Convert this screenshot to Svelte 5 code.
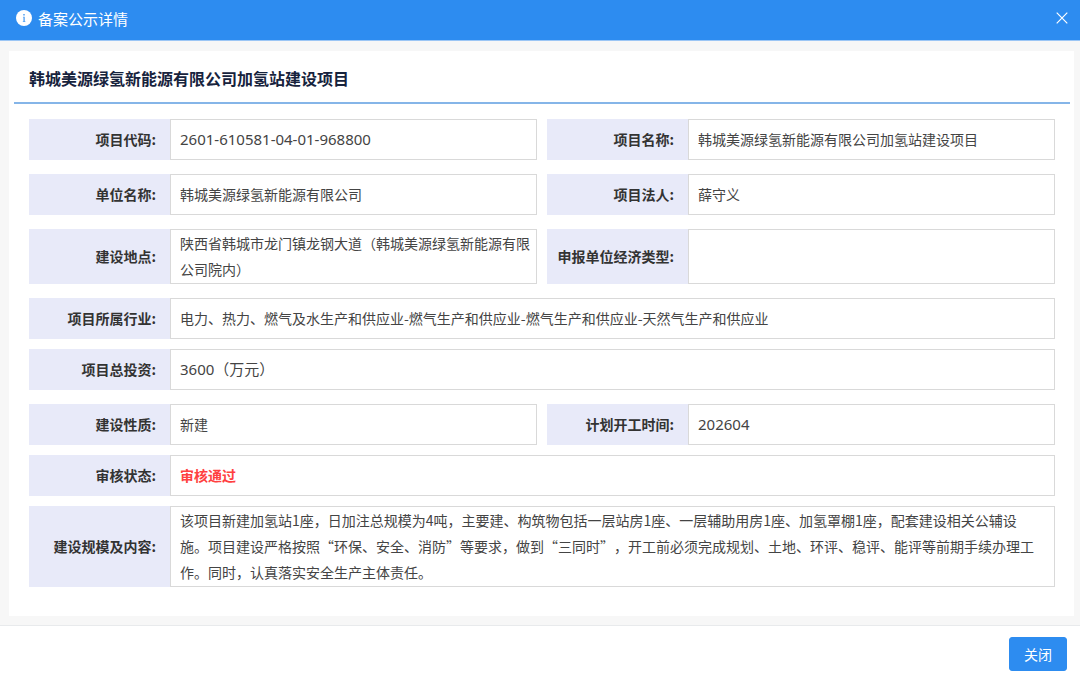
<script lang="ts">
type Field = {
  label: string
  value: string
  numeric?: boolean
  passed?: boolean
}

let open = true

const title = "韩城美源绿氢新能源有限公司加氢站建设项目"

// every group holds rows, every row holds one wide field or a pair
const groups: Field[][][] = [
  [
    [
      { label: "项目代码", value: "2601-610581-04-01-968800", numeric: true },
      { label: "项目名称", value: title }
    ]
  ],
  [
    [
      { label: "单位名称", value: "韩城美源绿氢新能源有限公司" },
      { label: "项目法人", value: "薛守义" }
    ]
  ],
  [
    [
      { label: "建设地点", value: "陕西省韩城市龙门镇龙钢大道（韩城美源绿氢新能源有限公司院内）" },
      { label: "申报单位经济类型", value: "" }
    ]
  ],
  [
    [{ label: "项目所属行业", value: "电力、热力、燃气及水生产和供应业-燃气生产和供应业-燃气生产和供应业-天然气生产和供应业" }],
    [{ label: "项目总投资", value: "3600（万元）", numeric: true }]
  ],
  [
    [
      { label: "建设性质", value: "新建" },
      { label: "计划开工时间", value: "202604", numeric: true }
    ],
    [{ label: "审核状态", value: "审核通过", passed: true }],
    [{ label: "建设规模及内容", value: "该项目新建加氢站1座，日加注总规模为4吨，主要建、构筑物包括一层站房1座、一层辅助用房1座、加氢罩棚1座，配套建设相关公辅设施。项目建设严格按照“环保、安全、消防”等要求，做到“三同时”，开工前必须完成规划、土地、环评、稳评、能评等前期手续办理工作。同时，认真落实安全生产主体责任。" }]
  ]
]

const close = () => {
  open = false
}
</script>

{#if open}
  <div class="modal" role="dialog" aria-labelledby="modal_title" lang="zh-CN">
    <header>
      <svg class="info" viewBox="0 0 16 16" aria-hidden="true">
        <circle cx="8" cy="8" r="8" fill="#fff" />
        <path d="M7.2 4h1.6v1.6H7.2zM7 6.8h1.8v4.4h.6v.8H6.8v-.8h.6V7.6H7z" fill="#5ba5f3" />
      </svg>
      <h1 id="modal_title">备案公示详情</h1>
      <button class="cross" type="button" aria-label="关闭窗口" on:click={close}>
        <svg viewBox="0 0 12 12" aria-hidden="true">
          <path d="M0.7 0.7L11.3 11.3M11.3 0.7L0.7 11.3" stroke="#fff" stroke-width="1.2" fill="none" />
        </svg>
      </button>
    </header>

    <div class="body">
      <section class="card">
        <h2>{title}</h2>
        <div class="groups">
          {#each groups as rows}
            <div class="group">
              {#each rows as row}
                <dl class="row">
                  {#each row as field}
                    <div class="field" class:wide={row.length === 1}>
                      <dt>{field.label}:</dt>
                      <dd class:numeric={field.numeric} class:passed={field.passed}>
                        <span>{field.value}</span>
                      </dd>
                    </div>
                  {/each}
                </dl>
              {/each}
            </div>
          {/each}
        </div>
      </section>
    </div>

    <footer>
      <button class="close" type="button" on:click={close}>关闭</button>
    </footer>
  </div>
{/if}

<style>
:global(body) {
  margin: 0;
  background: #fff;
}
.modal, button {
  font-family: "Noto Sans CJK SC", "Microsoft YaHei", sans-serif;
}
.modal {
  color: #444;
  font-size: 14px;
  text-spacing-trim: space-all;
}
header {
  display: flex;
  align-items: center;
  gap: 6px;
  height: 40px;
  padding: 0 12px 4px 16px;
  box-sizing: border-box;
  background: #2d8cf0;
}
h1 {
  flex: 1;
  margin: 0;
  padding-top: 2px;
  color: #fff;
  font-size: 15px;
  font-weight: 400;
  line-height: 20px;
}
.info {
  width: 16px;
  height: 16px;
}
.cross {
  display: flex;
  padding: 0;
  border: none;
  background: none;
  cursor: pointer;
}
.cross svg {
  width: 12px;
  height: 12px;
}
.body {
  padding: 10px 6px 9px 9px;
  border-top: 1px solid #9cc6f5;
  border-bottom: 1px solid #e8eaec;
  background: #f7f7f7;
}
.card {
  padding: 0 4px 29px 5px;
  background: #fff;
}
h2 {
  margin: 0;
  padding: 15px 15px 12px;
  border-bottom: 2px solid #85b5e8;
  color: #17233d;
  font-size: 16px;
  font-weight: 700;
  line-height: 24px;
}
.groups {
  display: flex;
  flex-direction: column;
  gap: 14px;
  padding: 15px 15px 0;
}
.group {
  display: flex;
  flex-direction: column;
  gap: 10px;
}
.row {
  display: flex;
  gap: 10px;
  margin: 0;
}
.field {
  display: flex;
  flex: 1 1 0;
  min-width: 0;
  min-height: 41px;
}
dt {
  display: flex;
  flex: none;
  align-items: center;
  justify-content: flex-end;
  width: 141px;
  padding: 0 14px 2px 0;
  box-sizing: border-box;
  background: #e8eaf9;
  color: #333;
  font-weight: 700;
}
dd {
  display: flex;
  flex: 1;
  align-items: center;
  min-width: 0;
  margin: 0;
  padding: 0 2px 1px 9px;
  border: 1px solid #d9d9d9;
  line-height: 26px;
}
.wide dd {
  padding-right: 10px;
}
.numeric {
  font-family: "Noto Sans", "Noto Sans CJK SC", sans-serif;
  font-size: 15px;
}
.passed {
  color: #ff4040;
  font-weight: 700;
}
footer {
  display: flex;
  justify-content: flex-end;
  padding: 11px 13px 7px;
}
.close {
  height: 34px;
  padding: 0 14px;
  border: 1px solid #2d8cf0;
  border-radius: 3px;
  background: #2d8cf0;
  color: #fff;
  font-size: 14px;
  cursor: pointer;
}
</style>
